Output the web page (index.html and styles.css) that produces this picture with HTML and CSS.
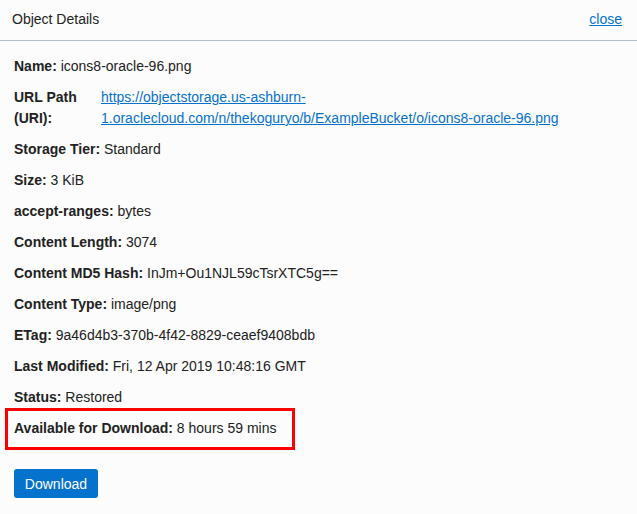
FILE: index.html
```html
<!DOCTYPE html>
<html>
<head>
<meta charset="utf-8">
<link rel="stylesheet" href="styles.css">
</head>
<body>
<div class="panel">
  <div class="header">
    <span class="title">Object Details</span>
    <a class="close" href="#">close</a>
  </div>
  <div class="body">
    <div class="row"><b>Name:</b> icons8-oracle-96.png</div>
    <div class="row url-row">
      <b class="url-label">URL Path (URI):</b>
      <a class="link" href="#">https://objectstorage.us-ashburn-<br>1.oraclecloud.com/n/thekoguryo/b/ExampleBucket/o/icons8-oracle-96.png</a>
    </div>
    <div class="row"><b>Storage Tier:</b> Standard</div>
    <div class="row"><b>Size:</b> 3 KiB</div>
    <div class="row"><b>accept-ranges:</b> bytes</div>
    <div class="row"><b>Content Length:</b> 3074</div>
    <div class="row"><b>Content MD5 Hash:</b> InJm+Ou1NJL59cTsrXTC5g==</div>
    <div class="row"><b>Content Type:</b> image/png</div>
    <div class="row"><b>ETag:</b> 9a46d4b3-370b-4f42-8829-ceaef9408bdb</div>
    <div class="row"><b>Last Modified:</b> Fri, 12 Apr 2019 10:48:16 GMT</div>
    <div class="row"><b>Status:</b> Restored</div>
    <div class="row highlight"><b>Available for Download:</b> 8 hours 59 mins</div>
    <button class="btn">Download</button>
  </div>
</div>
</body>
</html>
```
FILE: styles.css
```css
html, body {
  margin: 0;
  padding: 0;
  background: #fcfcfc;
}
body {
  font-family: "Liberation Sans", Arial, sans-serif;
  font-size: 14px;
  color: #222;
}
.header {
  border-bottom: 1px solid #b3bbc6;
  display: flex;
  align-items: center;
  justify-content: space-between;
  padding: 0 15px 3px 12px;
  box-sizing: border-box;
  height: 41px;
}
.title {
  color: #222;
}
.close {
  color: #0572ce;
  text-decoration: underline;
}
.body {
  padding: 15px 14px 0 14px;
  display: flex;
  flex-direction: column;
  align-items: flex-start;
}
.row {
  line-height: 21px;
  margin-bottom: 10px;
}
.row b {
  font-weight: bold;
}
.url-row {
  display: flex;
}
.url-label {
  width: 87px;
  flex: none;
}
.link {
  color: #0572ce;
  text-decoration: underline;
}
.highlight {
  position: relative;
}
.highlight::after {
  content: "";
  position: absolute;
  left: -9px;
  top: -10.5px;
  width: 290px;
  height: 42px;
  box-sizing: border-box;
  border: 3px solid #ff0000;
}
.btn {
  margin-top: 20px;
  width: 84px;
  height: 29px;
  border: none;
  border-radius: 3px;
  background: #0572ce;
  color: #fff;
  font-family: "Liberation Sans", Arial, sans-serif;
  font-size: 14px;
  padding: 0;
}
```
